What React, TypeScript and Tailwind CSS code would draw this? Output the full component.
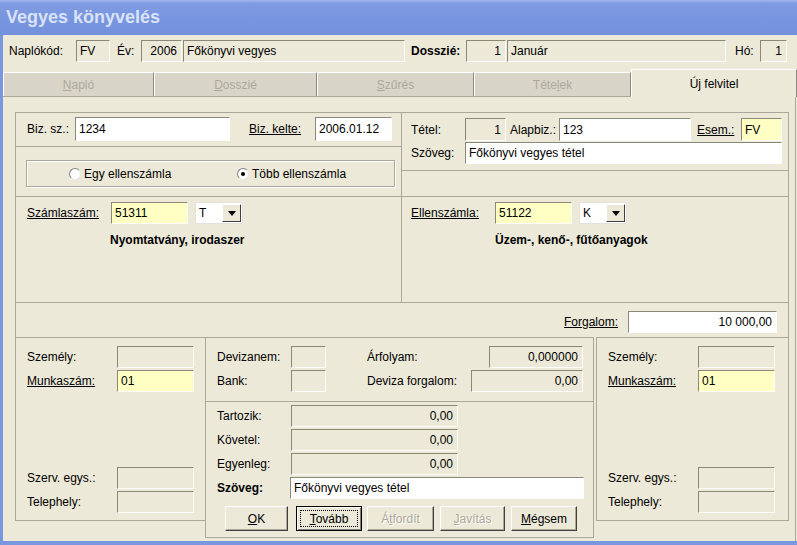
import React from 'react';

type Tone = 'ro' | 'white' | 'yellow';

const tones: Record<Tone, string> = {
  ro: 'bg-[#ece9d8]',
  white: 'bg-white',
  yellow: 'bg-[#ffffc4]',
};

const sunken =
  'border border-t-[#8a8878] border-l-[#8a8878] border-b-[#fdfdfb] border-r-[#fdfdfb]';

function Box({
  w,
  h = 'h-[22px]',
  tone = 'ro',
  right = false,
  children,
}: {
  w: string;
  h?: string;
  tone?: Tone;
  right?: boolean;
  children?: React.ReactNode;
}) {
  return (
    <div
      className={`${w} ${h} ${tones[tone]} ${sunken} shrink-0 flex items-center whitespace-nowrap leading-none ${
        right ? 'justify-end pr-[4px]' : 'pl-[3px]'
      }`}
    >
      {children}
    </div>
  );
}

function Select({ value }: { value: string }) {
  return (
    <div className="w-[48px] h-[22px] shrink-0 bg-white border border-[#e4e2d8] flex items-center">
      <span className="flex-1 pl-[3px] leading-none">{value}</span>
      <div className="w-[19px] h-[18px] mr-[1px] bg-[#ece9d8] border border-t-white border-l-white border-r-[#404040] border-b-[#404040] flex items-center justify-center">
        <div className="w-0 h-0 border-l-[4px] border-r-[4px] border-t-[5px] border-l-transparent border-r-transparent border-t-black" />
      </div>
    </div>
  );
}

function Radio({ checked }: { checked?: boolean }) {
  return (
    <div className="w-[12px] h-[12px] rounded-full bg-white border border-t-[#808080] border-l-[#808080] border-b-[#e8e8e8] border-r-[#e8e8e8] flex items-center justify-center">
      {checked && <div className="w-[4px] h-[4px] rounded-full bg-black" />}
    </div>
  );
}

function Btn({
  w,
  children,
  disabled,
  primary,
}: {
  w: string;
  children: React.ReactNode;
  disabled?: boolean;
  primary?: boolean;
}) {
  if (primary) {
    return (
      <div
        className={`${w} h-[25px] shrink-0 bg-[#ece9d8] border border-black shadow-[inset_1px_1px_0_#fff,inset_-1px_-1px_0_#808080] flex items-center justify-center p-[3px]`}
      >
        <span className="w-full h-full border border-dotted border-black flex items-center justify-center">
          {children}
        </span>
      </div>
    );
  }
  return (
    <div
      className={`${w} h-[25px] shrink-0 bg-[#ece9d8] border border-t-white border-l-white border-r-[#404040] border-b-[#404040] shadow-[inset_-1px_-1px_0_#aca899] flex items-center justify-center ${
        disabled ? 'text-[#aca899] [text-shadow:1px_1px_0_#fff]' : 'text-black'
      }`}
    >
      {children}
    </div>
  );
}

export default function App() {
  return (
    <div className="w-[797px] h-[545px] overflow-hidden flex flex-col bg-[#ece9d8] text-[12px] text-black font-['Liberation_Sans',Arial,sans-serif]">
      {/* Title bar */}
      <div className="h-[35px] shrink-0 flex items-center pl-[6px] bg-[linear-gradient(to_bottom,#a3b8ef_0%,#7e9be2_10%,#7895df_55%,#7390dc_100%)]">
        <span className="text-[18px] font-bold text-[#d9e2f7] leading-none pb-[1px]">Vegyes könyvelés</span>
      </div>

      <div className="flex-1 flex flex-col border-l-[3px] border-b-[4px] border-[#7a96df]">
        {/* Header row */}
        <div className="mt-[5px] h-[22px] flex items-center pl-[6px]">
          <span className="w-[67px] shrink-0">Naplókód:</span>
          <Box w="w-[34px]">FV</Box>
          <span className="w-[24px] ml-[7px] shrink-0">Év:</span>
          <Box w="w-[41px]" right>2006</Box>
          <div className="ml-[1px]">
            <Box w="w-[222px]">Főkönyvi vegyes</Box>
          </div>
          <span className="w-[55px] ml-[6px] shrink-0 font-bold">Dosszié:</span>
          <Box w="w-[40px]" right>1</Box>
          <div className="ml-[1px]">
            <Box w="w-[219px]">Január</Box>
          </div>
          <span className="w-[25px] ml-[9px] shrink-0">Hó:</span>
          <Box w="w-[27px]" right>1</Box>
        </div>

        {/* Tabs */}
        <div className="mt-[7px] h-[27px] flex items-end">
          <div className="w-[151px] h-[24px] bg-[#d8d5c8] border-t border-l border-t-white border-l-white border-r border-r-[#8d8b80] flex items-center justify-center text-[#aca899]">
            <span><u>N</u>apló</span>
          </div>
          <div className="w-[163px] h-[24px] bg-[#d8d5c8] border-t border-l border-t-white border-l-white border-r border-r-[#8d8b80] flex items-center justify-center text-[#aca899]">
            <span><u>D</u>osszié</span>
          </div>
          <div className="w-[157px] h-[24px] bg-[#d8d5c8] border-t border-l border-t-white border-l-white border-r border-r-[#8d8b80] flex items-center justify-center text-[#aca899]">
            <span><u>S</u>zűrés</span>
          </div>
          <div className="w-[157px] h-[24px] bg-[#d8d5c8] border-t border-l border-t-white border-l-white border-r border-r-[#8d8b80] flex items-center justify-center text-[#aca899]">
            <span>Téte<u>l</u>ek</span>
          </div>
          <div className="relative z-10 -mb-[1px] w-[166px] h-[28px] bg-[#ece9d8] border-t border-l border-t-white border-l-white border-r border-r-[#8d8b80] flex items-start justify-center pt-[5px]">
            <span>Új felvitel</span>
          </div>
        </div>

        {/* Tab page */}
        <div className="flex-1 w-[793px] border-t border-r border-[#aca899] pl-[12px] pt-[15px]">
          <div className="w-[774px] flex flex-col">
            {/* Top section */}
            <div className="h-[84px] flex">
              <div className="w-[386px] border-t border-l border-[#aca899] flex flex-col">
                <div className="h-[34px] border-b border-[#aca899] pl-[11px] pt-[4px] flex items-start">
                  <span className="w-[48px] shrink-0 h-[23px] flex items-center">Biz. sz.:</span>
                  <Box w="w-[155px]" h="h-[24px]" tone="white">1234</Box>
                  <span className="w-[66px] ml-[19px] shrink-0 h-[23px] flex items-center underline">Biz. kelte:</span>
                  <Box w="w-[77px]" h="h-[24px]" tone="white">2006.01.12</Box>
                </div>
                <div className="flex-1 pl-[10px] pt-[13px]">
                  <div className="w-[369px] h-[27px] border border-[#aca899] shadow-[1px_1px_0_#fff,inset_1px_1px_0_#fff] flex items-center pl-[42px]">
                    <div className="w-[168px] flex items-center gap-[3px]">
                      <Radio />
                      <span>Egy ellenszámla</span>
                    </div>
                    <div className="flex items-center gap-[3px]">
                      <Radio checked />
                      <span>Több ellenszámla</span>
                    </div>
                  </div>
                </div>
              </div>
              <div className="flex-1 border-t border-l border-r border-[#aca899] flex flex-col">
                <div className="h-[58px] border-b border-[#aca899] pl-[9px] pt-[5px] flex flex-col gap-[1px]">
                  <div className="h-[23px] flex items-center">
                    <span className="w-[54px] shrink-0">Tétel:</span>
                    <Box w="w-[41px]" h="h-[23px]" right>1</Box>
                    <span className="w-[49px] ml-[4px] shrink-0">Alapbiz.:</span>
                    <Box w="w-[132px]" h="h-[23px]" tone="white">123</Box>
                    <span className="w-[44px] ml-[6px] shrink-0 underline">Esem.:</span>
                    <Box w="w-[41px]" h="h-[23px]" tone="yellow">FV</Box>
                  </div>
                  <div className="h-[22px] flex items-center">
                    <span className="w-[54px] shrink-0">Szöveg:</span>
                    <Box w="w-[317px]" tone="white">Főkönyvi vegyes tétel</Box>
                  </div>
                </div>
                <div className="flex-1" />
              </div>
            </div>

            {/* Middle section */}
            <div className="h-[106px] flex">
              <div className="w-[386px] border-t border-l border-[#aca899] pl-[11px] pt-[5px]">
                <div className="h-[22px] flex items-center">
                  <span className="w-[84px] shrink-0 underline">Számlaszám:</span>
                  <Box w="w-[77px]" tone="yellow">51311</Box>
                  <div className="ml-[7px]">
                    <Select value="T" />
                  </div>
                </div>
                <div className="mt-[9px] ml-[83px] font-bold leading-[14px]">Nyomtatvány, irodaszer</div>
              </div>
              <div className="flex-1 border-t border-l border-r border-[#aca899] pl-[9px] pt-[5px]">
                <div className="h-[22px] flex items-center">
                  <span className="w-[84px] shrink-0 underline">Ellenszámla:</span>
                  <Box w="w-[77px]" tone="yellow">51122</Box>
                  <div className="ml-[7px]">
                    <Select value="K" />
                  </div>
                </div>
                <div className="mt-[9px] ml-[84px] font-bold leading-[14px]">Üzem-, kenő-, fűtőanyagok</div>
              </div>
            </div>

            {/* Forgalom row */}
            <div className="h-[35px] border-t border-l border-r border-[#aca899] flex items-start justify-end pr-[11px] pt-[8px]">
              <span className="h-[22px] flex items-center underline mr-[10px]">Forgalom:</span>
              <Box w="w-[149px]" tone="white" right>10 000,00</Box>
            </div>

            {/* Bottom section */}
            <div className="flex items-start">
              <div className="w-[190px] h-[184px] border-t border-l border-b border-[#aca899] pl-[11px] pt-[8px] pb-[7px] flex flex-col">
                <div className="flex flex-col gap-[2px]">
                  <div className="h-[22px] flex items-center">
                    <span className="w-[90px] shrink-0">Személy:</span>
                    <Box w="w-[77px]" />
                  </div>
                  <div className="h-[22px] flex items-center">
                    <span className="w-[90px] shrink-0 underline">Munkaszám:</span>
                    <Box w="w-[77px]" tone="yellow">01</Box>
                  </div>
                </div>
                <div className="mt-auto flex flex-col gap-[2px]">
                  <div className="h-[22px] flex items-center">
                    <span className="w-[90px] shrink-0">Szerv. egys.:</span>
                    <Box w="w-[77px]" />
                  </div>
                  <div className="h-[22px] flex items-center">
                    <span className="w-[90px] shrink-0">Telephely:</span>
                    <Box w="w-[77px]" />
                  </div>
                </div>
              </div>

              <div className="w-[389px] h-[201px] border-t border-l border-r border-b border-[#aca899] flex flex-col">
                <div className="h-[64px] border-b border-[#aca899] pl-[11px] pt-[8px] flex flex-col gap-[2px]">
                  <div className="h-[22px] flex items-center">
                    <span className="w-[74px] shrink-0">Devizanem:</span>
                    <Box w="w-[35px]" />
                    <span className="w-[122px] ml-[41px] shrink-0">Árfolyam:</span>
                    <Box w="w-[94px]" right>0,000000</Box>
                  </div>
                  <div className="h-[22px] flex items-center">
                    <span className="w-[74px] shrink-0">Bank:</span>
                    <Box w="w-[35px]" />
                    <span className="w-[104px] ml-[41px] shrink-0">Deviza forgalom:</span>
                    <Box w="w-[112px]" right>0,00</Box>
                  </div>
                </div>
                <div className="pl-[11px] pt-[3px] flex flex-col gap-[2px]">
                  <div className="h-[22px] flex items-center">
                    <span className="w-[74px] shrink-0">Tartozik:</span>
                    <Box w="w-[167px]" right>0,00</Box>
                  </div>
                  <div className="h-[22px] flex items-center">
                    <span className="w-[74px] shrink-0">Követel:</span>
                    <Box w="w-[167px]" right>0,00</Box>
                  </div>
                  <div className="h-[22px] flex items-center">
                    <span className="w-[74px] shrink-0">Egyenleg:</span>
                    <Box w="w-[167px]" right>0,00</Box>
                  </div>
                  <div className="h-[22px] flex items-center">
                    <span className="w-[73px] shrink-0 font-bold">Szöveg:</span>
                    <Box w="w-[294px]" tone="white">Főkönyvi vegyes tétel</Box>
                  </div>
                </div>
                <div className="mt-[7px] flex items-center">
                  <div className="ml-[19px]">
                    <Btn w="w-[63px]"><span><u>O</u>K</span></Btn>
                  </div>
                  <div className="ml-[8px]">
                    <Btn w="w-[66px]" primary><span><u>T</u>ovább</span></Btn>
                  </div>
                  <div className="ml-[5px]">
                    <Btn w="w-[67px]" disabled><span>Á<u>t</u>fordít</span></Btn>
                  </div>
                  <div className="ml-[6px]">
                    <Btn w="w-[65px]" disabled><span><u>J</u>avítás</span></Btn>
                  </div>
                  <div className="ml-[6px]">
                    <Btn w="w-[66px]"><span><u>M</u>égsem</span></Btn>
                  </div>
                </div>
              </div>

              <div className="ml-[2px] w-[193px] h-[184px] border-t border-l border-r border-b border-[#aca899] pl-[11px] pt-[8px] pb-[7px] flex flex-col">
                <div className="flex flex-col gap-[2px]">
                  <div className="h-[22px] flex items-center">
                    <span className="w-[90px] shrink-0">Személy:</span>
                    <Box w="w-[77px]" />
                  </div>
                  <div className="h-[22px] flex items-center">
                    <span className="w-[90px] shrink-0 underline">Munkaszám:</span>
                    <Box w="w-[77px]" tone="yellow">01</Box>
                  </div>
                </div>
                <div className="mt-auto flex flex-col gap-[2px]">
                  <div className="h-[22px] flex items-center">
                    <span className="w-[90px] shrink-0">Szerv. egys.:</span>
                    <Box w="w-[77px]" />
                  </div>
                  <div className="h-[22px] flex items-center">
                    <span className="w-[90px] shrink-0">Telephely:</span>
                    <Box w="w-[77px]" />
                  </div>
                </div>
              </div>
            </div>
          </div>
        </div>
      </div>
    </div>
  );
}
